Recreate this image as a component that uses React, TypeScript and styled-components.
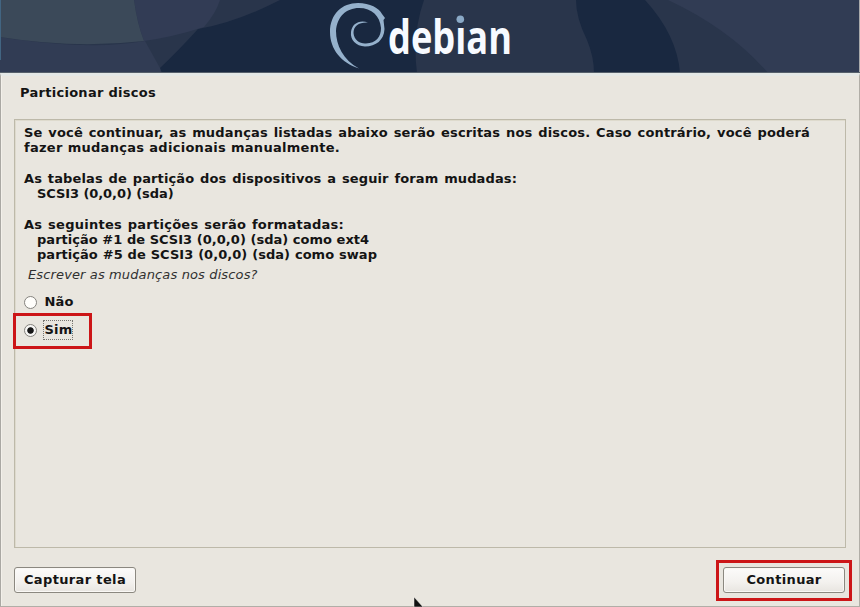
import React from "react";
import styled, { createGlobalStyle } from "styled-components";

const GlobalStyle = createGlobalStyle`
  * { box-sizing: border-box; }
  body { margin: 0; background: #e9e6df; overflow: hidden; }
`;

const Window = styled.div`
  position: relative;
  display: flex;
  flex-direction: column;
  width: 860px;
  height: 607px;
  overflow: hidden;
  background: #e9e6df;
  color: #141414;
  font: bold 13px/15.25px "DejaVu Sans", sans-serif;
`;

const Banner = styled.svg`
  display: block;
  flex: 0 0 73px;
  width: 860px;
  height: 73px;
`;

const Body = styled.main`
  flex: 1;
  display: flex;
  flex-direction: column;
  border: 1px solid #b1aea7;
  border-top: 3px solid #e4e8e6;
  border-left-color: #aaa8a3;
  padding: 9px 13px 11px;
  box-shadow: inset 1px 0 #f3f0ea;
`;

const Title = styled.h1`
  margin: 0 0 0 6px;
  height: 34px;
  font: inherit;
  line-height: 16px;
  letter-spacing: 0.28px;
`;

const Panel = styled.section`
  height: 429px;
  border: 1px solid #bdb9a9;
  box-shadow: inset 1px 1px #dedacd;
  padding: 5px 9px;
`;

const Line = styled.p<{ $indent?: boolean; $gap?: boolean; $width: number; $tracking: number }>`
  margin: ${(p) => (p.$gap ? "15.25px" : "0")} 0 0 ${(p) => (p.$indent ? 13 : 0)}px;
  width: ${(p) => p.$width}px;
  letter-spacing: ${(p) => p.$tracking}px;
  white-space: nowrap;
  text-align: justify;
  text-align-last: justify;
`;

const Question = styled.p`
  margin: 5px 0 0 4px;
  height: 17px;
  font-weight: normal;
  font-style: italic;
  letter-spacing: 0.13px;
  color: #303030;
`;

const Option = styled.label<{ $top: number }>`
  display: flex;
  align-items: center;
  gap: 5.5px;
  width: max-content;
  height: 20px;
  margin-top: ${(p) => p.$top}px;
`;

const Radio = styled.span<{ $checked?: boolean }>`
  width: 13px;
  height: 13px;
  border: 1px solid #85837e;
  border-radius: 50%;
  background: ${(p) =>
    p.$checked
      ? "radial-gradient(circle, #161616 0 2.8px, #f7f6f4 3.7px)"
      : "#fffefb"};
`;

const OptionText = styled.span<{ $focused?: boolean }>`
  padding: 1px 0 0 1px;
  height: 20px;
  line-height: 16px;
  letter-spacing: 0.2px;
  border: 1px ${(p) => (p.$focused ? "dotted #777570" : "solid transparent")};
`;

const Footer = styled.footer`
  display: flex;
  justify-content: space-between;
  margin: 19px 1px 0 0;
`;

const Button = styled.button`
  width: 122px;
  height: 26px;
  padding: 0;
  border: 1px solid #8b8880;
  border-radius: 3px;
  background: linear-gradient(#fcfbfa, #f3f1ee 60%, #e8e5e0);
  box-shadow: inset 0 0 0 1px #faf8f5;
  color: #141414;
  font: inherit;
  letter-spacing: 0.35px;
`;

const Highlight = styled.div<{ $x: number; $y: number; $w: number; $h: number }>`
  position: absolute;
  left: ${(p) => p.$x}px;
  top: ${(p) => p.$y}px;
  width: ${(p) => p.$w}px;
  height: ${(p) => p.$h}px;
  border: 3px solid #cc1517;
  pointer-events: none;
`;

const Pointer = styled.svg`
  position: absolute;
  left: 412px;
  top: 596px;
`;

function DebianBanner() {
  return (
    <Banner viewBox="0 0 860 73" aria-label="debian">
      <rect width="860" height="73" fill="#192840" />
      <path d="M0 0H280Q235 23 198 29Q178 51 160 68L162 73H0Z" fill="#29354b" />
      <path d="M0 37Q90 51 145 41L160 68L161 73H0Z" fill="#313c54" />
      <path d="M134 0H220Q216 13 204 27Q173 37 144 41Q137 23 134 0Z" fill="#323c55" />
      <path d="M0 0H134Q137 23 144 41Q75 49 0 37Z" fill="#3b4959" />
      <path d="M424 0H576Q576 18 587 40Q594 57 594 73H417Q412 34 424 0Z" fill="#29354b" />
      <path d="M645 0H860V73H680Q677 35 645 0Z" fill="#29354b" />
      <path d="M668 0H860V73H768Q730 29 668 0Z" fill="#313c54" />
      <path d="M0 0H1V60H0Z" fill="#426582" />
      <path d="M859 0H860V73H859Z" fill="#a9aaab" />
      <path d="M0 72H860V73H0Z" fill="#56606b" />
      <path
        d="M359 68.5C341 63 330 49 330 32C330 14 342 3 358 3C370 3 379 8 382 14L385 18L383.5 20L384.5 29C384 40 376 46.5 365 46.5C356 46 350 40 351 32C352 24 359 19.5 368 22.5C359 22 353.5 26 353.5 33C354 40 360 44 366 43.5C376 43 381 37 381 28C380 16 372 8 359 8C346 8 337 17 336 31C336 45 343 60 359 68.5Z"
        fill="#95b1cc"
      />
      <text
        x="388"
        y="54"
        textLength="124"
        lengthAdjust="spacingAndGlyphs"
        fontFamily="Open Sans"
        fontWeight="700"
        fontSize="47"
        fill="#f7faff"
      >
        debian
      </text>
      <rect x="453" y="10" width="14" height="15.5" fill="#29354b" />
      <circle cx="460.3" cy="19.2" r="3.8" fill="#8aa9c6" />
    </Banner>
  );
}

export default function App() {
  return (
    <>
      <GlobalStyle />
      <Window>
        <DebianBanner />
        <Body>
          <Title>Particionar discos</Title>
          <Panel>
            <Line $width={786} $tracking={0.17}>
              Se você continuar, as mudanças listadas abaixo serão escritas nos discos. Caso contrário, você poderá
            </Line>
            <Line $width={316} $tracking={0.28}>fazer mudanças adicionais manualmente.</Line>
            <Line $gap $width={493} $tracking={0.12}>As tabelas de partição dos dispositivos a seguir foram mudadas:</Line>
            <Line $indent $width={136} $tracking={-0.08}>SCSI3 (0,0,0) (sda)</Line>
            <Line $gap $width={320} $tracking={0.25}>As seguintes partições serão formatadas:</Line>
            <Line $indent $width={332} $tracking={0.03}>partição #1 de SCSI3 (0,0,0) (sda) como ext4</Line>
            <Line $indent $width={340} $tracking={0.03}>partição #5 de SCSI3 (0,0,0) (sda) como swap</Line>
            <Question>Escrever as mudanças nos discos?</Question>
            <Option $top={8}>
              <Radio />
              <OptionText>Não</OptionText>
            </Option>
            <Option $top={8}>
              <Radio $checked />
              <OptionText $focused>Sim</OptionText>
            </Option>
          </Panel>
          <Footer>
            <Button>Capturar tela</Button>
            <Button>Continuar</Button>
          </Footer>
        </Body>
        <Highlight $x={13} $y={313} $w={79} $h={36} />
        <Highlight $x={716} $y={560} $w={136} $h={41} />
        <Pointer width="12" height="11" viewBox="0 0 12 11">
          <path d="M2 1V11H11Z" fill="#111" stroke="#f5f3ef" strokeWidth=".5" />
        </Pointer>
      </Window>
    </>
  );
}
